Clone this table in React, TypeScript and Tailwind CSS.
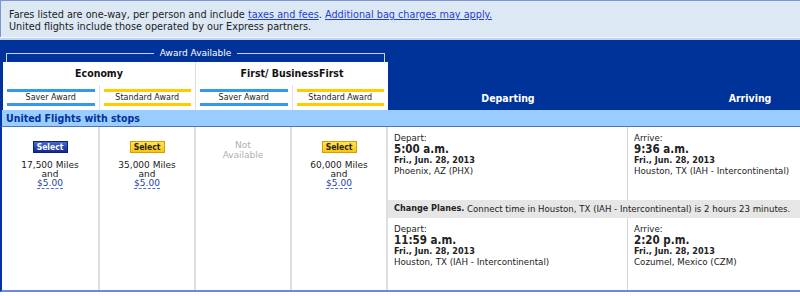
const regular = "font-['DejaVu_Sans',sans-serif]";
const heavy = "font-['DejaVu_Sans_Condensed','Liberation_Sans',sans-serif] font-bold";

function AwardTab({ label, tone }: { label: string; tone: "saver" | "standard" }) {
  const bar = tone === "saver" ? "bg-[#3399ee]" : "bg-[#ffcc00]";
  return (
    <div className="flex-1 px-[4px] pt-[4px]">
      <div className={`h-[3px] ${bar}`} />
      <div className={`${regular} h-[11px] text-center text-[8px] leading-[11px] text-[#222]`}>
        {label}
      </div>
      <div className={`h-[3px] ${bar}`} />
    </div>
  );
}

function SelectButton({ tone }: { tone: "blue" | "yellow" }) {
  const look =
    tone === "blue"
      ? "bg-gradient-to-b from-[#4a6ad0] to-[#14288f] border-[#0b1f7a] text-white"
      : "bg-gradient-to-b from-[#ffe34d] to-[#ffc400] border-[#d2a000] text-[#222]";
  return (
    <button
      className={`${heavy} ${look} h-[12px] w-[35px] border text-[8.5px] leading-[10px]`}
    >
      Select
    </button>
  );
}

function Fare({
  miles,
  tone,
  width,
}: {
  miles: string;
  tone: "blue" | "yellow";
  width: string;
}) {
  return (
    <div
      className={`${width} flex shrink-0 flex-col items-center border-r-[2px] border-[#dedede] pt-[14px]`}
    >
      <SelectButton tone={tone} />
      <div className={`${regular} mt-[8px] flex flex-col items-center text-[9px] leading-[9px] text-[#222]`}>
        <div>{miles}</div>
        <div>and</div>
        <a className="border-b border-dashed border-[#4d6fd0] text-[#2142a8]">$5.00</a>
      </div>
    </div>
  );
}

function Stop({
  label,
  time,
  date,
  place,
  width,
}: {
  label: string;
  time: string;
  date: string;
  place: string;
  width: string;
}) {
  return (
    <div className={`${width} shrink-0 pl-[6px] pt-[6px] text-[#222]`}>
      <div className={`${regular} text-[8.7px] leading-[10px]`}>{label}</div>
      <div className={`${heavy} text-[11.5px] leading-[12px]`}>{time}</div>
      <div className={`${heavy} text-[9px] leading-[11px]`}>{date}</div>
      <div className={`${regular} whitespace-nowrap text-[8.7px] leading-[10px]`}>{place}</div>
    </div>
  );
}

export default function App() {
  return (
    <div className={`${regular} h-[296px] w-[800px] overflow-hidden bg-white`}>
      {/* notice */}
      <div className="h-[37px] border-l border-t border-[#7b96d1] bg-[#dde8f5] px-[8px] pt-[8px] text-[9.7px] leading-[12px] text-[#222]">
        <p className="whitespace-nowrap">
          Fares listed are one-way, per person and include{" "}
          <a className="text-[#1f3fcf] underline">taxes and fees</a>.{" "}
          <a className="text-[#1f3fcf] underline">Additional bag charges may apply.</a>
        </p>
        <p>United flights include those operated by our Express partners.</p>
      </div>
      <div className="h-[1px] bg-[#f3f6fc]" />
      <div className="h-[2px] bg-[#c3d1ec]" />

      {/* header */}
      <div className="flex h-[70px] bg-[#003399] pl-[3px]">
        <div className="flex w-[385px] shrink-0 flex-col">
          <div className="flex h-[22px] items-end px-[3px]">
            <div className="h-[9px] flex-1 border-l border-t border-[#c9d3ec]" />
            <span className="mb-[3px] px-[6px] text-[9px] leading-[12px] text-white">
              Award Available
            </span>
            <div className="h-[9px] flex-1 border-r border-t border-[#c9d3ec]" />
          </div>
          <div className="flex h-[48px] bg-white">
            <div className="flex w-[193px] shrink-0 flex-col border-r border-[#dedede]">
              <div className={`${heavy} flex h-[23px] items-center justify-center text-[10.5px] text-[#111]`}>
                Economy
              </div>
              <div className="flex flex-1">
                <AwardTab label="Saver Award" tone="saver" />
                <div className="w-[1px] bg-[#e2e2e2]" />
                <AwardTab label="Standard Award" tone="standard" />
              </div>
            </div>
            <div className="flex flex-1 flex-col">
              <div className={`${heavy} flex h-[23px] items-center justify-center text-[10.5px] text-[#111]`}>
                First/ BusinessFirst
              </div>
              <div className="flex flex-1">
                <AwardTab label="Saver Award" tone="saver" />
                <div className="w-[1px] bg-[#e2e2e2]" />
                <AwardTab label="Standard Award" tone="standard" />
              </div>
            </div>
          </div>
        </div>
        <div className={`${heavy} flex flex-1 items-end pb-[5px] text-[10.5px] leading-[13px] text-white`}>
          <div className="w-[240px] shrink-0 text-center">Departing</div>
          <div className="w-[244px] shrink-0 text-center">Arriving</div>
        </div>
      </div>

      {/* section band */}
      <div
        className={`${heavy} h-[17px] border-b border-l-[2px] border-b-[#4f73bd] border-l-[#0033aa] bg-[#99ccff] pl-[4px] text-[10.5px] leading-[16px] text-[#003399]`}
      >
        United Flights with stops
      </div>

      {/* body */}
      <div className="flex h-[165px] border-b-[2px] border-l-[2px] border-b-[#6b8cd6] border-l-[#0033aa]">
        <Fare miles="17,500 Miles" tone="blue" width="w-[98px]" />
        <Fare miles="35,000 Miles" tone="yellow" width="w-[96px]" />
        <div className="flex w-[96px] shrink-0 flex-col items-center border-r-[2px] border-[#dedede] pt-[13px] text-[9px] leading-[10px] text-[#b0b0b0]">
          <div>Not</div>
          <div>Available</div>
        </div>
        <Fare miles="60,000 Miles" tone="yellow" width="w-[96px]" />

        <div className="flex flex-1 flex-col">
          <div className="flex h-[73px]">
            <Stop
              width="w-[240px] border-r border-[#d6d6d6]"
              label="Depart:"
              time="5:00 a.m."
              date="Fri., Jun. 28, 2013"
              place="Phoenix, AZ (PHX)"
            />
            <Stop
              width="w-[244px]"
              label="Arrive:"
              time="9:36 a.m."
              date="Fri., Jun. 28, 2013"
              place="Houston, TX (IAH - Intercontinental)"
            />
          </div>
          <div className="flex h-[18px] items-center whitespace-nowrap bg-[#e6e6e6] pl-[6px] text-[8.6px] text-[#222]">
            <span className={`${heavy} text-[9px]`}>Change Planes.</span>
            <span>&nbsp;Connect time in Houston, TX (IAH - Intercontinental) is 2 hours 23 minutes.</span>
          </div>
          <div className="flex flex-1">
            <Stop
              width="w-[240px] border-r border-[#d6d6d6]"
              label="Depart:"
              time="11:59 a.m."
              date="Fri., Jun. 28, 2013"
              place="Houston, TX (IAH - Intercontinental)"
            />
            <Stop
              width="w-[244px]"
              label="Arrive:"
              time="2:20 p.m."
              date="Fri., Jun. 28, 2013"
              place="Cozumel, Mexico (CZM)"
            />
          </div>
        </div>
      </div>
    </div>
  );
}
